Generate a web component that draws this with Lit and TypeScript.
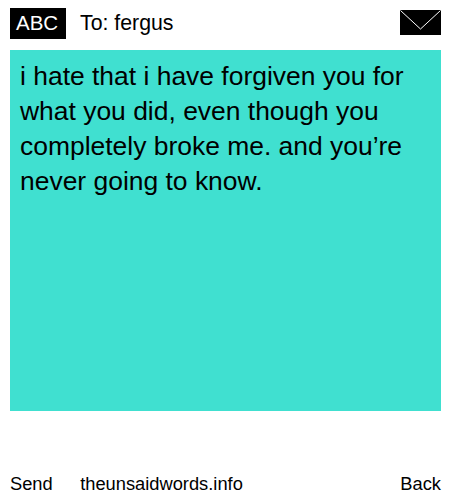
import { LitElement, html, css } from "lit";
import { customElement } from "lit/decorators.js";

@customElement("app-root")
export class AppRoot extends LitElement {
  static styles = css`
    :host {
      display: block;
      width: 450px;
      height: 500px;
      background: #fff;
      color: #000;
      font-family: "Liberation Sans", Arial, sans-serif;
      overflow: hidden;
    }
    .page {
      display: flex;
      flex-direction: column;
      height: 500px;
      padding: 8px 9px 0 10px;
      box-sizing: border-box;
    }
    .top {
      display: flex;
      align-items: center;
      height: 31px;
      margin-bottom: 11px;
    }
    .abc {
      background: #000;
      color: #fff;
      width: 56px;
      height: 31px;
      line-height: 30px;
      padding-left: 6px;
      box-sizing: border-box;
      font-size: 20.5px;
    }
    .to {
      margin-left: 14px;
      font-size: 21.3px;
      line-height: 31px;
      flex: 1;
    }
    svg {
      display: block;
      width: 41px;
      height: 25px;
      margin-top: -2px;
    }
    .msg {
      background: #40e0d0;
      height: 361px;
      padding: 9px 10px;
      box-sizing: border-box;
      font-size: 26.45px;
      line-height: 35px;
    }
    .foot {
      display: flex;
      font-size: 18.3px;
      line-height: 24px;
      margin-top: 61px;
    }
    .site { margin-left: 27.5px; flex: 1; }
  `;

  render() {
    return html`
      <div class="page">
        <div class="top">
          <div class="abc">ABC</div>
          <div class="to">To: fergus</div>
          <svg viewBox="0 0 41 25" aria-hidden="true">
            <rect width="41" height="25" fill="#000" />
            <path d="M0.5 0.5 L20.5 19 L40.5 0.5" fill="none" stroke="#fff" stroke-width="1" />
          </svg>
        </div>
        <div class="msg">i hate that i have forgiven you for what you did, even though you completely broke me. and you’re never going to know.</div>
        <div class="foot">
          <span>Send</span>
          <span class="site">theunsaidwords.info</span>
          <span>Back</span>
        </div>
      </div>
    `;
  }
}
